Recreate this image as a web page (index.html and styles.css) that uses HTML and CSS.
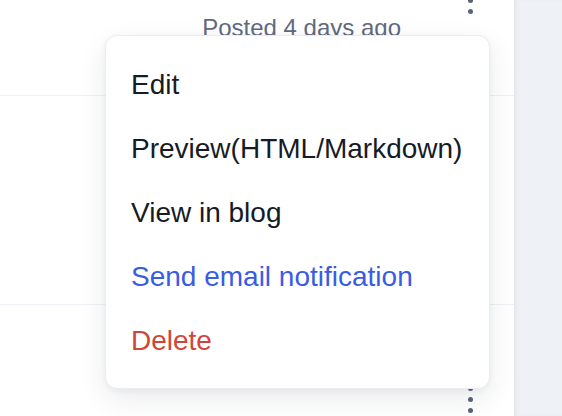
FILE: index.html
```html
<!DOCTYPE html>
<html>
<head>
<meta charset="utf-8">
<link rel="stylesheet" href="styles.css">
</head>
<body>
<div class="layout">
  <main class="list">
    <div class="row row-top">
      <div class="kebab kebab-top"><span></span><span></span><span></span></div>
      <div class="posted">Posted 4 days ago</div>
    </div>
    <div class="row row-mid"></div>
    <div class="row row-bottom">
      <div class="kebab kebab-bottom"><span></span><span></span><span></span></div>
    </div>
  </main>
  <aside class="side"></aside>
</div>
<ul class="menu">
  <li class="item">Edit</li>
  <li class="item">Preview(HTML/Markdown)</li>
  <li class="item">View in blog</li>
  <li class="item item-blue">Send email notification</li>
  <li class="item item-red">Delete</li>
</ul>
</body>
</html>
```
FILE: styles.css
```css
html, body {
  margin: 0;
  padding: 0;
  height: 100%;
  overflow: hidden;
  font-family: "Liberation Sans", Arial, sans-serif;
  background: #ffffff;
}
.layout {
  display: flex;
  height: 416px;
}
.list {
  width: 514px;
  flex: none;
  background: #ffffff;
  display: flex;
  flex-direction: column;
}
.side {
  flex: 1;
  background: #eef1f6;
  box-shadow: inset 4px 0 4px -2px #e1e5ee;
}
.row {
  border-bottom: 1px solid #edf0f5;
  display: flex;
  flex-direction: column;
  align-items: flex-end;
  padding-right: 41px;
  box-sizing: border-box;
}
.row-top { height: 96px; }
.row-mid { height: 209px; }
.row-bottom { flex: 1; border-bottom: none; }
.kebab {
  display: flex;
  flex-direction: column;
  gap: 6px;
  width: 5px;
}
.kebab span {
  width: 5px;
  height: 5px;
  border-radius: 50%;
  background: #5a6478;
}
.kebab-top { margin-top: -13.5px; }
.kebab-bottom { margin-top: 81px; }
.posted {
  margin-right: 72px;
  font-size: 24px;
  line-height: 28px;
  color: #5f6a80;
}
.menu {
  position: absolute;
  left: 105px;
  top: 35px;
  width: 385px;
  box-sizing: border-box;
  margin: 0;
  padding: 17px 0 15px;
  list-style: none;
  background: #ffffff;
  border: 1px solid #ececf0;
  border-radius: 12px;
  box-shadow: 0 10px 28px rgba(20, 30, 60, 0.09), 0 2px 6px rgba(20, 30, 60, 0.05);
}
.item {
  height: 64px;
  line-height: 64px;
  padding-left: 25px;
  font-size: 28px;
  color: #161b26;
}
.item-blue { color: #3a5ce3; }
.item-red { color: #cf463b; }
```
